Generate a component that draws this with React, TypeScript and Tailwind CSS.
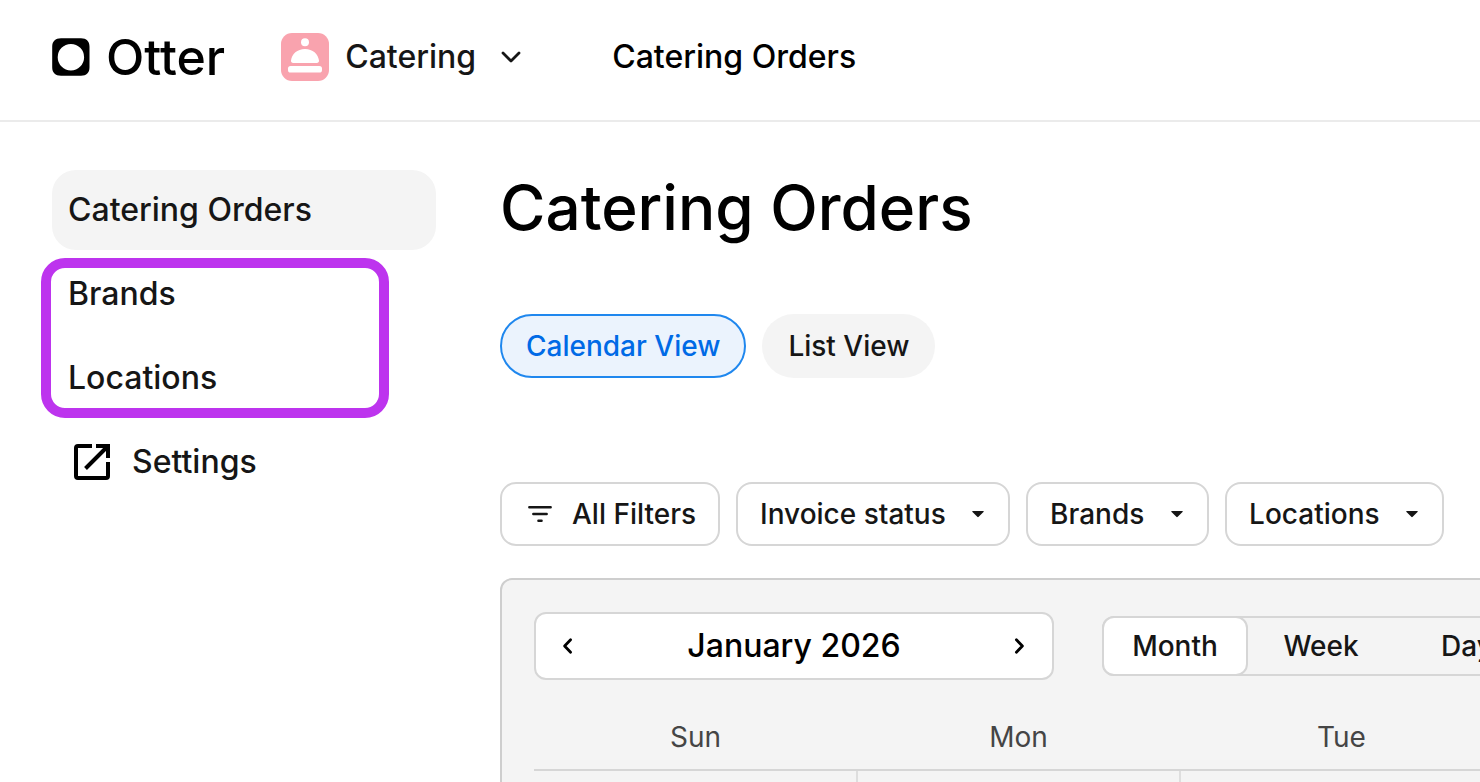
import type { FC, ReactNode } from 'react'

const FILTERS = ['Invoice status', 'Brands', 'Locations']
const MODES = ['Month', 'Week', 'Day']
const DAYS = ['Sun', 'Mon', 'Tue', 'Wed', 'Thu', 'Fri', 'Sat']

const OtterLogo: FC = () => (
  <a href="#home" className="flex items-center gap-4 text-black">
    <svg className="h-[38px] w-[38px]" viewBox="0 0 38 38" aria-hidden="true">
      <path
        fill="currentColor"
        fillRule="evenodd"
        d="M9 .2h20c5.500 0 8.500 3 8.500 8.500v20.500c0 5.500-3 8.500-8.500 8.500H9C3.300 37.700.2 34.700.2 29.200V8.700C.2 3.200 3.300.2 9 .2ZM18.900 6a13.200 13.200 0 1 0 0 26.400 13.200 13.200 0 0 0 0-26.400Z"
      />
    </svg>
    <span className="text-[50px] leading-none font-medium">Otter</span>
  </a>
)

const CateringIcon: FC = () => (
  <svg className="h-12 w-12" viewBox="0 0 48 48" aria-hidden="true">
    <rect width="48" height="48" rx="11" fill="#f9a3ae" />
    <g fill="#fff">
      <circle cx="24" cy="9.200" r="4" />
      <path d="M24 16c7.800 0 13.200 5 14 11.500.2 1.600-.8 2.500-2.200 2.500H12.200c-1.400 0-2.400-.9-2.200-2.500C10.800 21 16.200 16 24 16Z" />
      <rect x="7" y="33" width="34" height="6.600" rx="2.600" />
    </g>
  </svg>
)

const OpenIcon: FC = () => (
  <svg
    className="h-12 w-12"
    viewBox="0 0 48 48"
    fill="none"
    stroke="#000"
    strokeWidth="4"
    aria-hidden="true"
  >
    <path d="M24 8H10a2 2 0 0 0-2 2v28a2 2 0 0 0 2 2h28a2 2 0 0 0 2-2V24" />
    <path d="M28 8h12v12M39 9 17.500 30.500" />
  </svg>
)

const FilterIcon: FC = () => (
  <svg
    className="h-8 w-8"
    viewBox="0 0 32 32"
    fill="none"
    stroke="currentColor"
    strokeWidth="2.400"
    strokeLinecap="round"
    aria-hidden="true"
  >
    <path d="M5.300 9.300h21.400M9.300 16h13.400M14.400 22.700h3.200" />
  </svg>
)

const Chevron: FC<{ d: string; className: string }> = ({ d, className }) => (
  <svg
    className={className}
    viewBox="0 0 32 32"
    fill="none"
    stroke="currentColor"
    strokeWidth="2.800"
    strokeLinecap="round"
    strokeLinejoin="round"
    aria-hidden="true"
  >
    <path d={d} />
  </svg>
)

const FilterSelect: FC<{ label: string }> = ({ label }) => (
  <div className="relative">
    <select
      aria-label={label}
      className="h-16 appearance-none rounded-2xl border-2 border-[#d6d6d6] bg-white pr-[62px] pl-[22px]"
    >
      <option>{label}</option>
    </select>
    <svg
      className="pointer-events-none absolute top-4 right-4 h-8 w-8"
      viewBox="0 0 32 32"
      fill="currentColor"
      aria-hidden="true"
    >
      <path d="M10.900 13h10.200c.6 0 .8.6.4 1l-4.800 4.800a1 1 0 0 1-1.400 0L10.500 14c-.4-.4-.2-1 .4-1Z" />
    </svg>
  </div>
)

const NavLink: FC<{ href: string; active?: boolean; children: ReactNode }> = ({
  href,
  active,
  children,
}) => (
  <a
    href={href}
    className={`flex h-20 items-center gap-4 rounded-3xl px-4 ${active ? 'bg-[#f4f4f4]' : ''}`}
  >
    {children}
  </a>
)

const App: FC = () => {
  return (
    <div className="flex h-screen flex-col overflow-hidden bg-white font-['Inter',sans-serif] text-[32px] font-medium text-[#161616]">
      {/* Header */}
      <header className="flex h-[122px] shrink-0 items-center border-b-2 border-[#ebebeb] px-[52px] pb-[6px]">
        <OtterLogo />
        <div className="ml-14 flex items-center gap-4">
          <CateringIcon />
          <div className="relative">
            <select aria-label="Product" className="h-12 appearance-none bg-transparent pr-14">
              <option>Catering</option>
            </select>
            <Chevron
              d="M7 12l8 8 8-8"
              className="pointer-events-none absolute top-2 right-1 h-8 w-8"
            />
          </div>
        </div>
        <span className="ml-20 text-black">Catering Orders</span>
      </header>

      <div className="flex min-h-0 flex-1 gap-16 pt-12 pl-[52px]">
        {/* Sidebar */}
        <nav className="flex w-96 shrink-0 flex-col gap-1">
          <NavLink href="#orders" active>
            Catering Orders
          </NavLink>
          <div className="relative flex flex-col gap-1">
            <NavLink href="#brands">Brands</NavLink>
            <NavLink href="#locations">Locations</NavLink>
            <div className="pointer-events-none absolute top-1 right-[47px] bottom-0 -left-[11px] rounded-3xl border-[10px] border-[#bd34ee]" />
          </div>
          <NavLink href="#settings">
            <OpenIcon />
            Settings
          </NavLink>
        </nav>

        <main className="flex min-w-0 flex-1 flex-col text-[28px]">
          <h1 className="text-[62px] leading-[76px] text-black">Catering Orders</h1>

          <div className="mt-[68px] flex gap-4">
            <button
              type="button"
              className="h-16 rounded-full border-2 border-[#1f87ee] bg-[#ebf3fd] px-6 text-[#006ae6]"
            >
              Calendar View
            </button>
            <button type="button" className="h-16 rounded-full bg-[#f4f4f4] px-[26px]">
              List View
            </button>
          </div>

          {/* Filters */}
          <div className="mt-[104px] flex gap-4">
            <button
              type="button"
              className="flex h-16 shrink-0 items-center gap-4 rounded-2xl border-2 border-[#d6d6d6] px-[22px]"
            >
              <FilterIcon />
              All Filters
            </button>
            {FILTERS.map((label) => (
              <FilterSelect key={label} label={label} />
            ))}
          </div>

          {/* Calendar */}
          <section className="mt-8 w-max rounded-xl border-2 border-[#cecece] bg-[#f4f4f4] p-8">
            <div className="flex items-center gap-12">
              <div className="flex h-[68px] w-[520px] items-center justify-between rounded-xl border-2 border-[#d6d6d6] bg-white px-4 text-[32px] text-black">
                <button type="button" aria-label="Previous month">
                  <Chevron d="M18.600 9.800l-6 6.200 6 6.200" className="h-8 w-8" />
                </button>
                <span>January 2026</span>
                <button type="button" aria-label="Next month">
                  <Chevron d="M12.400 9.800l6 6.200-6 6.200" className="h-8 w-8" />
                </button>
              </div>
              <div className="flex h-[60px] rounded-xl border-2 border-[#d6d6d6]">
                {MODES.map((mode) => (
                  <button
                    key={mode}
                    type="button"
                    className={`-my-[2px] w-[146px] rounded-xl first:-ml-[2px] ${mode === 'Month' ? 'border-2 border-[#d6d6d6] bg-white' : ''}`}
                  >
                    {mode}
                  </button>
                ))}
              </div>
            </div>

            <table className="mt-6 table-fixed border-collapse">
              <thead>
                <tr>
                  {DAYS.map((day) => (
                    <th
                      key={day}
                      className="h-[66px] w-[323px] border-b-2 border-[#d6d6d6] font-normal text-[#454545]"
                    >
                      {day}
                    </th>
                  ))}
                </tr>
              </thead>
              <tbody>
                <tr>
                  {DAYS.map((day) => (
                    <td key={day} className="h-60 border-r-2 border-[#dedede]" />
                  ))}
                </tr>
              </tbody>
            </table>
          </section>
        </main>
      </div>
    </div>
  )
}

export default App
